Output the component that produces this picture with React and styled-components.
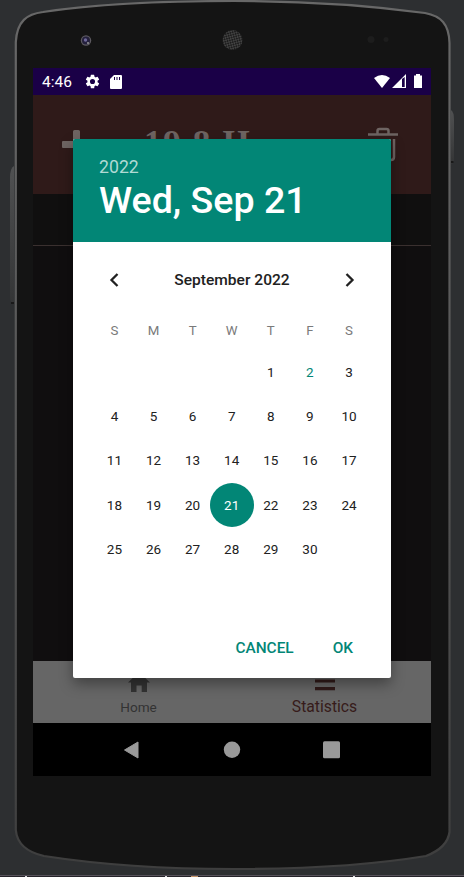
import React from 'react';
import styled, { createGlobalStyle } from 'styled-components';

const Global = createGlobalStyle`
  * { box-sizing: border-box; }
  body { margin: 0; background: #2d2f31; font-family: Roboto, sans-serif; overflow: hidden; }
  button { font: inherit; color: inherit; background: none; border: 0; padding: 0; }
`;

const Phone = styled.main`
  position: relative;
  width: 464px;
  height: 877px;
  padding: 68px 33px 101px;
  overflow: hidden;
`;
const Chassis = styled.svg`
  position: absolute;
  inset: 0;
`;
const Screen = styled.section`
  position: relative;
  width: 398px;
  height: 708px;
  display: flex;
  flex-direction: column;
  background: #100e0f;
`;
const StatusBar = styled.header`
  height: 27px;
  display: flex;
  align-items: center;
  justify-content: space-between;
  padding: 0 8px 0 9px;
  background: #1a0047;
  color: #fff;
`;
const StatusGroup = styled.div`
  display: flex;
  align-items: center;
  gap: ${(p) => p.$gap}px;
`;
const Clock = styled.span`
  font-size: 15.5px;
  line-height: 27px;
  padding-top: 1px;
  width: 33px;
  white-space: nowrap;
`;
const AppBar = styled.div`
  height: 99px;
  display: flex;
  align-items: flex-start;
  padding: 32px 0 0 28px;
  background: #2f1a19;
  color: #6e6462;
`;
const AppTitle = styled.h1`
  margin: 0 0 0 54px;
  width: 224px;
  font: 700 35px/34px "Liberation Serif", serif;
  letter-spacing: 1.7px;
  white-space: nowrap;
`;
const FilterRow = styled.div`
  height: 52px;
  background: #100f0f;
  border-bottom: 1px solid #3a302f;
`;
const Content = styled.div`
  flex: 1;
`;
const Tabs = styled.nav`
  height: 62px;
  display: grid;
  grid-template-columns: 211px 1fr;
  background: #666;
`;
const Tab = styled.div`
  display: flex;
  flex-direction: column;
  align-items: center;
  padding-top: 10px;
  padding-right: ${(p) => (p.$active ? 26 : 0)}px;
  color: ${(p) => (p.$active ? '#361b1a' : '#333')};
  font-size: ${(p) => (p.$active ? 15.7 : 13.6)}px;
  line-height: 20px;
  gap: ${(p) => (p.$active ? 6 : 4)}px;
`;
const SystemNav = styled.nav`
  height: 53px;
  display: flex;
  align-items: center;
  justify-content: center;
  gap: 80px;
  background: #000;
`;
const Dialog = styled.section`
  position: absolute;
  left: 40px;
  top: 71px;
  width: 318px;
  height: 539px;
  display: flex;
  flex-direction: column;
  border-radius: 2px;
  overflow: hidden;
  background: #fff;
  color: #212121;
  box-shadow: 0 6px 14px rgba(0, 0, 0, 0.36);
`;
const DateHeader = styled.header`
  height: 103px;
  padding: 18px 26px 0;
  background: #028676;
  color: #fff;
`;
const Year = styled.div`
  font-size: 17.7px;
  line-height: 21px;
  color: #b0dad4;
`;
const ChosenDate = styled.div`
  font-size: 37.6px;
  font-weight: 500;
  line-height: 44px;
  white-space: nowrap;
`;
const MonthBar = styled.div`
  height: 75px;
  display: flex;
  align-items: center;
  justify-content: space-between;
  padding: 0 30px;
`;
const MonthName = styled.h2`
  margin: 0;
  font-size: 15.55px;
  font-weight: 500;
`;
const Arrow = styled.button`
  width: 22px;
  height: 22px;
  display: grid;
  place-items: center;
`;
const Week = styled.div`
  display: grid;
  grid-template-columns: repeat(7, 39.1px);
  justify-content: center;
  place-items: center;
  height: ${(p) => (p.$heading ? 26 : 44.2)}px;
  margin-bottom: ${(p) => (p.$heading ? 7 : 0)}px;
  padding-right: 0.6px;
  flex-shrink: 0;
`;
const Weekday = styled.span`
  font-size: 13.3px;
  color: #7a7a7a;
`;
const Day = styled.span`
  width: 44px;
  height: 44px;
  border-radius: 50%;
  text-align: center;
  font-size: 13.5px;
  line-height: 44px;
  background: ${(p) => (p.$selected ? '#028676' : 'transparent')};
  color: ${(p) => (p.$selected ? '#fff' : p.$today ? '#028676' : '#212121')};
`;
const Actions = styled.footer`
  margin-top: auto;
  height: 61px;
  display: flex;
  justify-content: flex-end;
  align-items: center;
  gap: 39px;
  padding-right: 38px;
`;
const Action = styled.button`
  font-size: 15.4px;
  font-weight: 500;
  color: #028676;
`;

const gearPath = 'M19.14 12.94c.04-.3.06-.61.06-.94s-.02-.64-.07-.94l2.03-1.58a.49.49 0 0 0 .12-.61l-1.92-3.32a.49.49 0 0 0-.59-.22l-2.39.96a7 7 0 0 0-1.62-.94l-.36-2.54A.48.48 0 0 0 13.92 2.4h-3.84a.48.48 0 0 0-.47.41l-.36 2.54a7.3 7.3 0 0 0-1.62.94l-2.39-.96a.48.48 0 0 0-.59.22L2.74 8.87a.48.48 0 0 0 .12.61l2.03 1.58a6 6 0 0 0 0 1.88l-2.03 1.58a.49.49 0 0 0-.12.61l1.92 3.32c.12.22.37.29.59.22l2.39-.96c.5.38 1.03.7 1.62.94l.36 2.54c.05.24.24.41.48.41h3.84c.24 0 .44-.17.47-.41l.36-2.54a7 7 0 0 0 1.62-.94l2.39.96c.22.08.47 0 .59-.22l1.92-3.32a.48.48 0 0 0-.12-.61zM12 15.6a3.6 3.6 0 1 1 0-7.2 3.6 3.6 0 0 1 0 7.2z';

const weeks = [
  ['', '', '', '', 1, 2, 3],
  [4, 5, 6, 7, 8, 9, 10],
  [11, 12, 13, 14, 15, 16, 17],
  [18, 19, 20, 21, 22, 23, 24],
  [25, 26, 27, 28, 29, 30, ''],
];

function PhoneChassis() {
  return (
    <Chassis width="464" height="877" viewBox="0 0 464 877" aria-hidden="true">
      <defs>
        <linearGradient id="rim" x1="0" y1="0" x2="0" y2="1">
          <stop offset="0" stopColor="#686868" />
          <stop offset=".5" stopColor="#545454" />
          <stop offset="1" stopColor="#3e3e3e" />
        </linearGradient>
        <linearGradient id="key" x1="0" y1="0" x2="0" y2="1">
          <stop offset="0" stopColor="#505152" />
          <stop offset="1" stopColor="#343536" />
        </linearGradient>
        <pattern id="mesh" width="3.4" height="3.4" patternUnits="userSpaceOnUse" patternTransform="rotate(30)">
          <circle cx="1.7" cy="1.7" r="1.3" fill="#111" stroke="#5c5c5c" strokeWidth=".6" />
        </pattern>
      </defs>
      <path d="M14 166Q10 168 10 178V298Q10 303 14 304Z" fill="url(#key)" />
      <path d="M11 303h3" stroke="#191919" strokeWidth="2" />
      <path d="M451 110Q454 112 454 120V160Q454 163 451 164Z" fill="url(#key)" />
      <path d="M451 162h2.500" stroke="#191919" strokeWidth="2" />
      <path
        d="M15.800 42C17 21 27 14 43 12C103 3 170 1 234 1C305 1 365 5 425 13C441 16 449 24 449.500 43V832C448 844 439 851 426 856C365 866 300 869 234 869C168 869 102 865 44 856C26 852 17 843 15.800 830Z"
        fill="#141414" stroke="url(#rim)" strokeWidth="2.2"
      />
      <circle cx="86" cy="40.500" r="5.200" fill="#5d5a60" />
      <circle cx="86" cy="40.500" r="4" fill="#24203c" />
      <circle cx="85.500" cy="40" r="1.700" fill="#6e689a" />
      <circle cx="88" cy="43" r="1" fill="#999" />
      <circle cx="232.500" cy="40" r="10" fill="url(#mesh)" />
      <circle cx="371" cy="39.500" r="3.500" fill="#1d1d1d" />
      <circle cx="386" cy="39.500" r="2.500" fill="#1d1d1d" />
      <path d="M0 875.500H464" stroke="#57525b" />
      <path d="M0 876.500H464" stroke="#252329" />
      <path d="M25 876.500h2M165 876.500h2M353 876.500h2" stroke="#ddd" />
      <path d="M191 876.500h7" stroke="#c79467" />
    </Chassis>
  );
}

function DatePicker() {
  return (
    <Dialog role="dialog">
      <DateHeader>
        <Year>2022</Year>
        <ChosenDate>Wed, Sep 21</ChosenDate>
      </DateHeader>
      <MonthBar>
        <Arrow aria-label="Previous month">
          <svg width="22" height="22" viewBox="0 0 22 22"><path d="M14.500 5 8.500 11l6 6" fill="none" stroke="#212121" strokeWidth="2.300" /></svg>
        </Arrow>
        <MonthName>September 2022</MonthName>
        <Arrow aria-label="Next month">
          <svg width="22" height="22" viewBox="0 0 22 22"><path d="m7.500 5 6 6-6 6" fill="none" stroke="#212121" strokeWidth="2.300" /></svg>
        </Arrow>
      </MonthBar>
      <Week $heading>
        {['S', 'M', 'T', 'W', 'T', 'F', 'S'].map((d, i) => <Weekday key={i}>{d}</Weekday>)}
      </Week>
      {weeks.map((week, row) => (
        <Week key={row}>
          {week.map((day, i) => <Day key={i} $selected={day === 21} $today={day === 2}>{day}</Day>)}
        </Week>
      ))}
      <Actions>
        <Action>CANCEL</Action>
        <Action>OK</Action>
      </Actions>
    </Dialog>
  );
}

export default function App() {
  return (
    <>
      <Global />
      <Phone>
        <PhoneChassis />
        <Screen>
          <StatusBar>
            <StatusGroup $gap={9}>
              <Clock>4:46</Clock>
              <svg width="17" height="17" viewBox="0 0 24 24" fill="#fff"><path fillRule="evenodd" d={gearPath} /></svg>
              <svg width="12" height="14" viewBox="0 0 12 14"><path fillRule="evenodd" fill="#fff" d="M4 0h7q1 0 1 1v12q0 1-1 1H1q-1 0-1-1V4zM4 2v3h1V2zm2.500 0v3h1V2zM9 2v3h1V2z" /></svg>
            </StatusGroup>
            <svg width="49" height="15" viewBox="0 0 49 15" fill="#fff">
              <path d="M0 4Q8-2 16 4L8 14z" />
              <path fillRule="evenodd" d="M18 14 32 0v14zM28 5v8h2.700V3z" />
              <path d="M42 0h4v1.500h2V14h-8V1.500h2z" />
            </svg>
          </StatusBar>
          <AppBar>
            <svg width="29" height="32" viewBox="0 0 29 32">
              <path d="M12 4.500q0-1.500 1.500-1.500h4q1.500 0 1.500 1.500V14h9v7h-9v10h-7V21H2q-1 0-1-1v-5q0-1 1-1h10z" fill="#6e6462" />
            </svg>
            <AppTitle>19.8.H</AppTitle>
            <svg width="30" height="38" viewBox="0 0 30 38" fill="none" stroke="#6e6462" strokeWidth="2.500"><path d="M0 7.500h30M9.500 7V4q0-2 2-2h7q2 0 2 2v3M4 12v18q0 3 3 3h16q3 0 3-3V12" /></svg>
          </AppBar>
          <FilterRow />
          <Content />
          <Tabs>
            <Tab>
              <svg width="22" height="22" viewBox="0 0 22 22"><path d="M11 1 22 11.500h-3V21h-5.300v-6.500H8.500V21H3v-9.500H0z" fill="#333" /></svg>
              <span>Home</span>
            </Tab>
            <Tab $active>
              <svg width="20" height="20" viewBox="0 0 20 20"><path d="M0 2h20M0 10h20M0 17.700h20" stroke="#301a19" strokeWidth="3.200" /></svg>
              <span>Statistics</span>
            </Tab>
          </Tabs>
          <SystemNav>
            <svg width="20" height="20" viewBox="0 0 20 20"><path d="M16 2v16L2.500 10z" fill="#999" stroke="#999" strokeLinejoin="round" /></svg>
            <svg width="20" height="20" viewBox="0 0 20 20"><circle cx="10" cy="9.700" r="8.200" fill="#999" /></svg>
            <svg width="20" height="20" viewBox="0 0 20 20"><rect x="1" y="1.200" width="17" height="17" rx="1.500" fill="#999" /></svg>
          </SystemNav>
          <DatePicker />
        </Screen>
      </Phone>
    </>
  );
}
